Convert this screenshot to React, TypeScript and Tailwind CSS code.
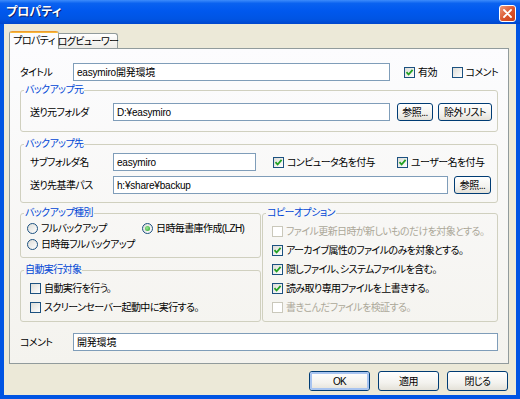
import React from "react";

function CheckBox({ checked = false, disabled = false }: { checked?: boolean; disabled?: boolean }) {
  return (
    <span
      className={
        disabled
          ? "w-[11px] h-[11px] shrink-0 border border-[#CAC8BB] bg-white"
          : "w-[11px] h-[11px] shrink-0 border border-[#1C5180] bg-[linear-gradient(135deg,#DCDCD7,#FFFFFF)] flex items-center justify-center"
      }
    >
      {checked && (
        <svg width="9" height="9" viewBox="0 0 9 9">
          <path d="M1.5 4.2 L3.6 6.5 L7.6 1.8" fill="none" stroke="#21A121" strokeWidth="1.8" />
        </svg>
      )}
    </span>
  );
}

function Check({
  label,
  checked = false,
  disabled = false,
  className = "",
}: {
  label: string;
  checked?: boolean;
  disabled?: boolean;
  className?: string;
}) {
  return (
    <div className={"flex items-center gap-[3px] " + className}>
      <CheckBox checked={checked} disabled={disabled} />
      <span className={disabled ? "text-[#ACA899] whitespace-nowrap" : "text-black whitespace-nowrap"}>{label}</span>
    </div>
  );
}

function Radio({ label, checked = false, className = "" }: { label: string; checked?: boolean; className?: string }) {
  return (
    <div className={"flex items-center gap-[3px] " + className}>
      <span className="w-[11px] h-[11px] shrink-0 rounded-full border border-[#1C5180] bg-[linear-gradient(135deg,#DCDCD7,#FFFFFF)] flex items-center justify-center">
        {checked && <span className="w-[5px] h-[5px] rounded-full bg-[radial-gradient(circle_at_40%_40%,#9BE89B,#21A121)]" />}
      </span>
      <span className="whitespace-nowrap">{label}</span>
    </div>
  );
}

function Input({ value, className = "" }: { value: string; className?: string }) {
  return (
    <div className={"h-[18px] shrink-0 border border-[#7F9DB9] bg-white flex items-center px-[3px] whitespace-nowrap overflow-hidden tracking-[-0.2px] " + className}>
      {value}
    </div>
  );
}

function Btn({ label, className = "", isDefault = false }: { label: string; className?: string; isDefault?: boolean }) {
  return (
    <div
      className={
        "shrink-0 border border-[#003C74] rounded-[3px] bg-[linear-gradient(to_bottom,#FFFFFF,#F3F2EE_60%,#E4E1D8)] flex items-center justify-center whitespace-nowrap " +
        className
      }
    >
      {isDefault ? (
        <div className="w-full h-full rounded-[2px] border-[2px] border-[#A8C4F0] flex items-center justify-center">{label}</div>
      ) : (
        label
      )}
    </div>
  );
}

function Group({ title, className = "", children }: { title: string; className?: string; children?: React.ReactNode }) {
  return (
    <fieldset className={"border border-[#D0D0BF] rounded-[3px] min-w-0 " + className}>
      <legend className="ml-[3px] px-[1px] text-[#0046D5] leading-[14px]">{title}</legend>
      {children}
    </fieldset>
  );
}

export default function App() {
  return (
    <div className="w-[520px] h-[399px] bg-[#0054E3] flex flex-col overflow-hidden font-['Liberation_Sans','Noto_Sans_CJK_JP',sans-serif] text-[10px] tracking-[-0.6px] text-black [font-feature-settings:'palt']">
      {/* Title bar */}
      <div className="h-[24px] shrink-0 flex items-center justify-between pl-[6px] pr-[4px] bg-[linear-gradient(to_bottom,#3D8CFB_0%,#0A62F0_14%,#0058EE_45%,#0054E3_80%,#0046CC_100%)]">
        <span className="text-white font-bold text-[12px] tracking-[0px] [text-shadow:1px_1px_0_#0A1E6A]">プロパティ</span>
        <div className="w-[17px] h-[17px] mt-[2px] rounded-[3px] border border-white bg-[linear-gradient(135deg,#EE9A7C,#D9532B_55%,#C8401A)] flex items-center justify-center">
          <svg width="9" height="9" viewBox="0 0 9 9">
            <path d="M1 1 L8 8 M8 1 L1 8" stroke="white" strokeWidth="1.8" strokeLinecap="round" />
          </svg>
        </div>
      </div>

      {/* Client */}
      <div className="mx-[4px] mb-[4px] flex-1 bg-[#ECE9D8] flex flex-col">
        {/* Tabs */}
        <div className="pt-[7px] pl-[5px] flex items-end relative z-10">
          <div className="w-[50px] h-[18px] -mb-[1px] bg-[#FCFCFE] border-x border-[#919B9C] rounded-t-[3px] flex flex-col">
            <div className="h-[3px] rounded-t-[2px] bg-[linear-gradient(to_bottom,#E68B2C,#FFC73C)]" />
            <div className="flex-1 flex items-center justify-center pb-[1px] whitespace-nowrap">プロパティ</div>
          </div>
          <div className="w-[59px] h-[15px] bg-[linear-gradient(to_bottom,#FFFFFF,#ECEBE6)] border-t border-r border-[#919B9C] rounded-tr-[3px] flex items-center justify-center whitespace-nowrap">
            ログビューワー
          </div>
        </div>

        {/* Panel */}
        <div className="ml-[5px] w-[500px] h-[316px] shrink-0 border border-[#919B9C] bg-[linear-gradient(to_bottom,#FCFCFE,#F4F3EE)] px-[10px] flex flex-col">
          {/* Title row */}
          <div className="mt-[14px] h-[18px] flex items-center">
            <span className="w-[53px] shrink-0">タイトル</span>
            <Input value="easymiro開発環境" className="w-[317px]" />
            <Check label="有効" checked className="ml-[14px] w-[49px]" />
            <Check label="コメント" />
          </div>

          {/* バックアップ元 */}
          <Group title="バックアップ元" className="mt-[2px]">
            <div className="pt-[6px] pb-[10px] pl-[9px] flex items-center">
              <span className="w-[83px] shrink-0">送り元フォルダ</span>
              <Input value="D:¥easymiro" className="w-[277px]" />
              <Btn label="参照..." className="ml-[7px] w-[36px] h-[18px]" />
              <Btn label="除外リスト" className="ml-[5px] w-[54px] h-[18px]" />
            </div>
          </Group>

          {/* バックアップ先 */}
          <Group title="バックアップ先" className="mt-[5px]">
            <div className="pt-[2px] pb-[8px] pl-[9px] flex flex-col gap-[5px]">
              <div className="flex items-center h-[18px]">
                <span className="w-[83px] shrink-0">サブフォルダ名</span>
                <Input value="easymiro" className="w-[143px]" />
                <Check label="コンピュータ名を付与" checked className="ml-[17px] w-[124px]" />
                <Check label="ユーザー名を付与" checked />
              </div>
              <div className="flex items-center h-[18px]">
                <span className="w-[83px] shrink-0">送り先基準パス</span>
                <Input value="h:¥share¥backup" className="w-[335px]" />
                <Btn label="参照..." className="ml-[6px] w-[37px] h-[18px]" />
              </div>
            </div>
          </Group>

          {/* Lower groups */}
          <div className="mt-[3px] flex gap-[1px]">
            <div className="w-[241px] shrink-0 flex flex-col gap-[5px]">
              <Group title="バックアップ種別">
                <div className="pb-[5px] pl-[6px] flex flex-col">
                  <div className="h-[16px] flex items-center">
                    <Radio label="フルバックアップ" className="w-[115px]" />
                    <Radio label="日時毎書庫作成(LZH)" checked />
                  </div>
                  <div className="h-[16px] flex items-center">
                    <Radio label="日時毎フルバックアップ" />
                  </div>
                </div>
              </Group>
              <Group title="自動実行対象">
                <div className="pt-[2px] pb-[4px] pl-[9px] flex flex-col">
                  <Check label="自動実行を行う。" className="h-[19px]" />
                  <Check label="スクリーンセーバー起動中に実行する。" className="h-[19px]" />
                </div>
              </Group>
            </div>
            <Group title="コピーオプション" className="flex-1">
              <div className="pt-[2px] pb-[4px] pl-[9px] flex flex-col">
                <Check label="ファイル更新日時が新しいものだけを対象とする。" disabled className="h-[19px]" />
                <Check label="アーカイブ属性のファイルのみを対象とする。" checked className="h-[19px]" />
                <Check label="隠しファイル、システムファイルを含む。" checked className="h-[19px]" />
                <Check label="読み取り専用ファイルを上書きする。" checked className="h-[19px]" />
                <Check label="書きこんだファイルを検証する。" disabled className="h-[19px]" />
              </div>
            </Group>
          </div>

          {/* Comment row */}
          <div className="mt-[11px] h-[18px] flex items-center">
            <span className="w-[53px] shrink-0">コメント</span>
            <Input value="開発環境" className="w-[425px]" />
          </div>
        </div>

        {/* Buttons */}
        <div className="mt-[7px] pr-[8px] flex justify-end gap-[8px]">
          <Btn label="OK" isDefault className="w-[61px] h-[20px]" />
          <Btn label="適用" className="w-[61px] h-[20px]" />
          <Btn label="閉じる" className="w-[61px] h-[20px]" />
        </div>
      </div>
    </div>
  );
}
